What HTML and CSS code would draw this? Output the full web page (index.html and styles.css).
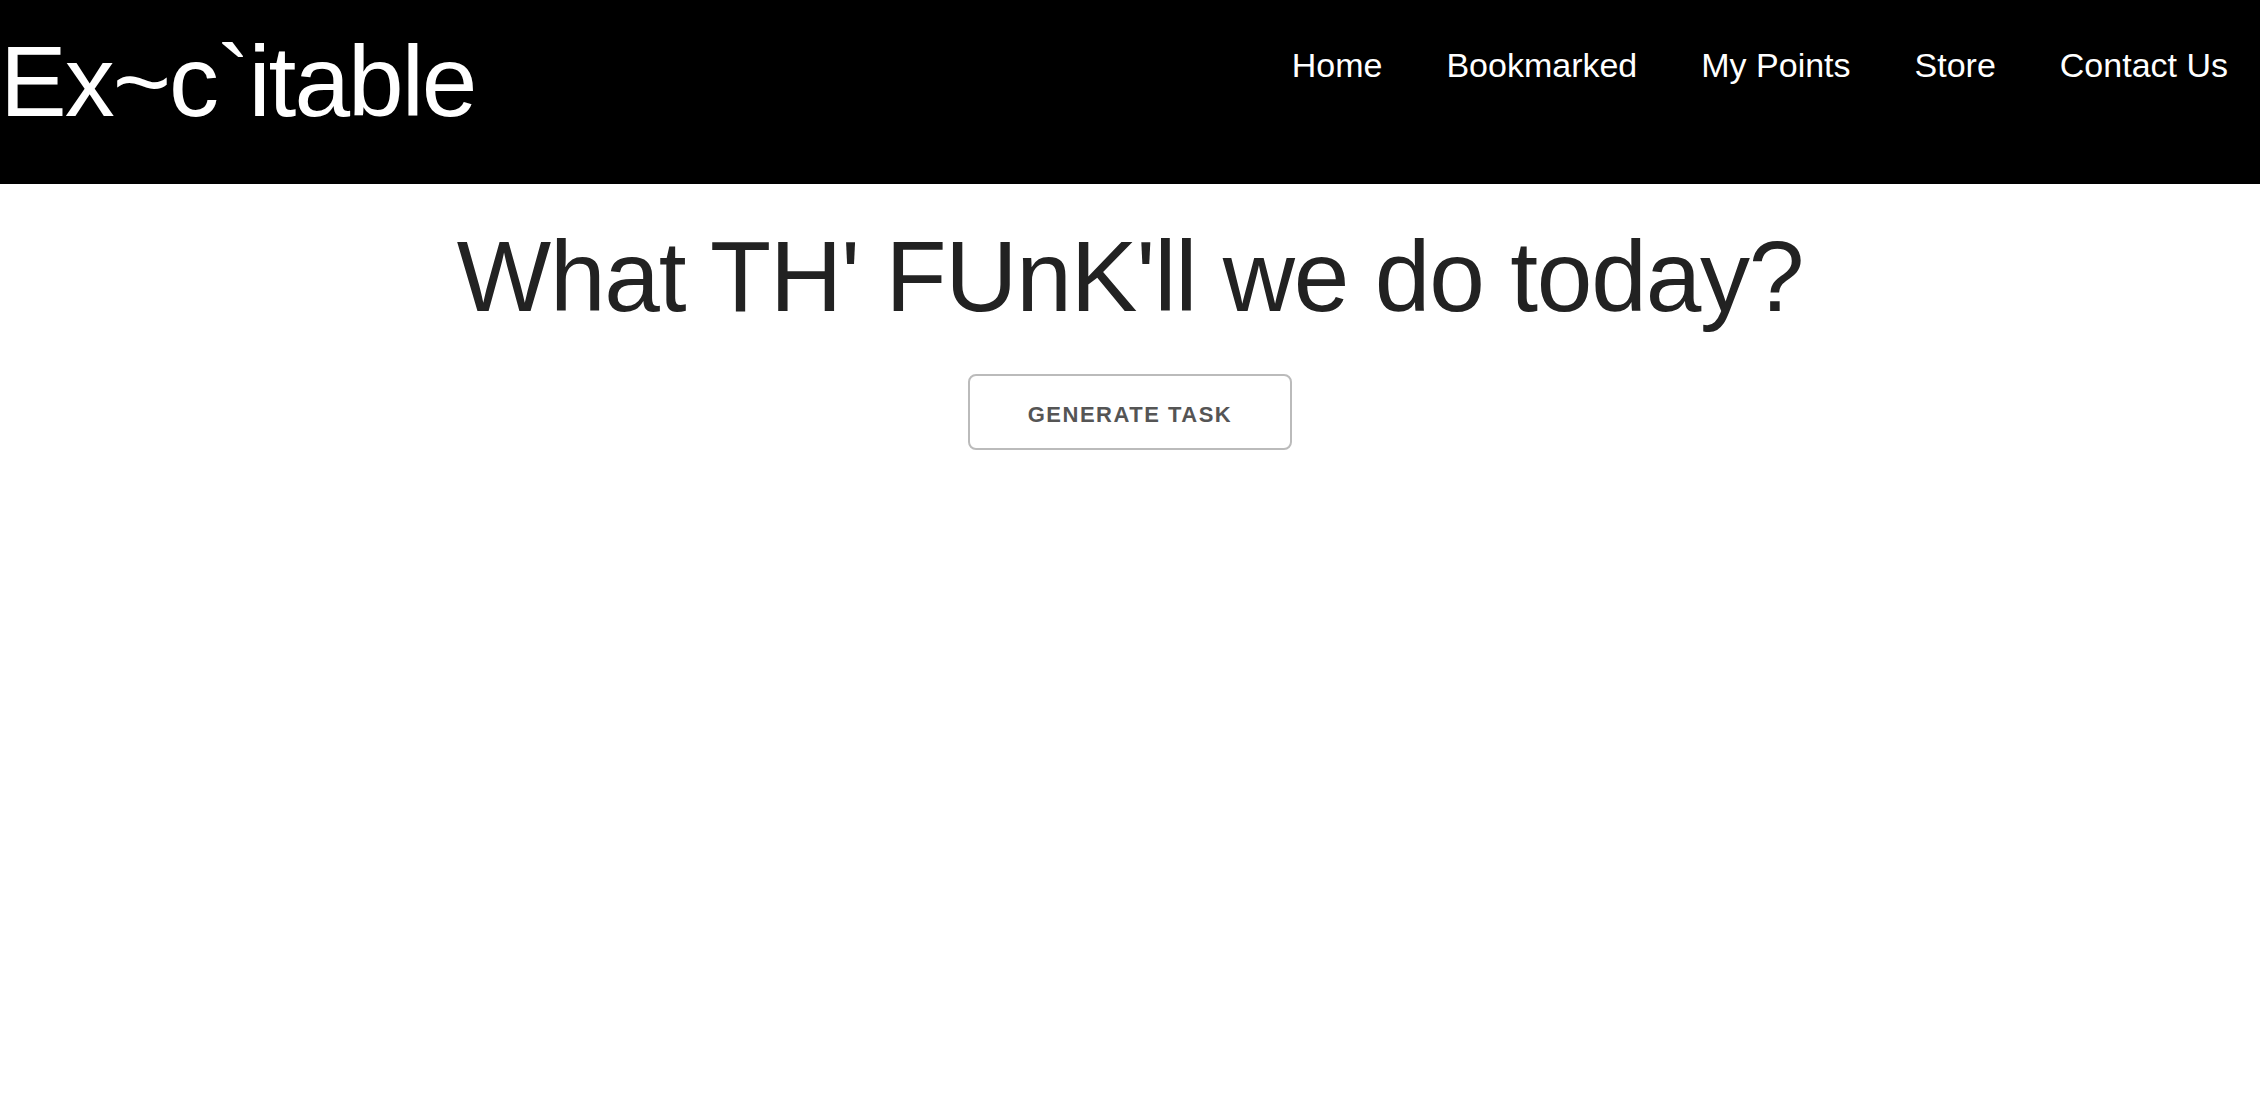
FILE: index.html
```html
<!DOCTYPE html>
<html lang="en">
<head>
<meta charset="utf-8">
<title>Ex~c`itable</title>
<link rel="stylesheet" href="styles.css">
</head>
<body>
<header class="topbar">
  <div class="logo">Ex~c`itable</div>
  <nav class="nav">
    <a class="nav-link" href="#">Home</a>
    <a class="nav-link" href="#">Bookmarked</a>
    <a class="nav-link" href="#">My Points</a>
    <a class="nav-link" href="#">Store</a>
    <a class="nav-link" href="#">Contact Us</a>
  </nav>
</header>
<main class="main">
  <h1 class="headline">What TH' FUnK'll we do today?</h1>
  <button class="task-button" type="button">Generate Task</button>
</main>
</body>
</html>
```
FILE: styles.css
```css
html, body {
  margin: 0;
  padding: 0;
  background: #fff;
}
body {
  font-family: "Liberation Sans", Arial, Helvetica, sans-serif;
  color: #222;
}
.topbar {
  display: flex;
  justify-content: space-between;
  align-items: flex-start;
  height: 184px;
  background: #000;
}
.logo {
  font-size: 100px;
  line-height: 1.2;
  letter-spacing: -2px;
  color: #fff;
  padding-top: 21px;
}
.nav {
  display: flex;
  padding-top: 40px;
}
.nav-link {
  font-size: 34px;
  line-height: 1.5;
  color: #fff;
  text-decoration: none;
  padding: 0 32px;
}
.main {
  display: flex;
  flex-direction: column;
  align-items: center;
}
.headline {
  font-size: 100px;
  font-weight: 400;
  line-height: 1.2;
  letter-spacing: -1.2px;
  margin: 32px 0 38px;
  color: #222;
}
.task-button {
  box-sizing: border-box;
  height: 76px;
  padding: 5px 58px 0;
  border: 2px solid #bbb;
  border-radius: 8px;
  background: transparent;
  color: #555;
  font-family: "Liberation Sans", Arial, Helvetica, sans-serif;
  font-size: 22px;
  font-weight: 700;
  letter-spacing: 1.5px;
  text-transform: uppercase;
  line-height: 67px;
  cursor: pointer;
}
```
